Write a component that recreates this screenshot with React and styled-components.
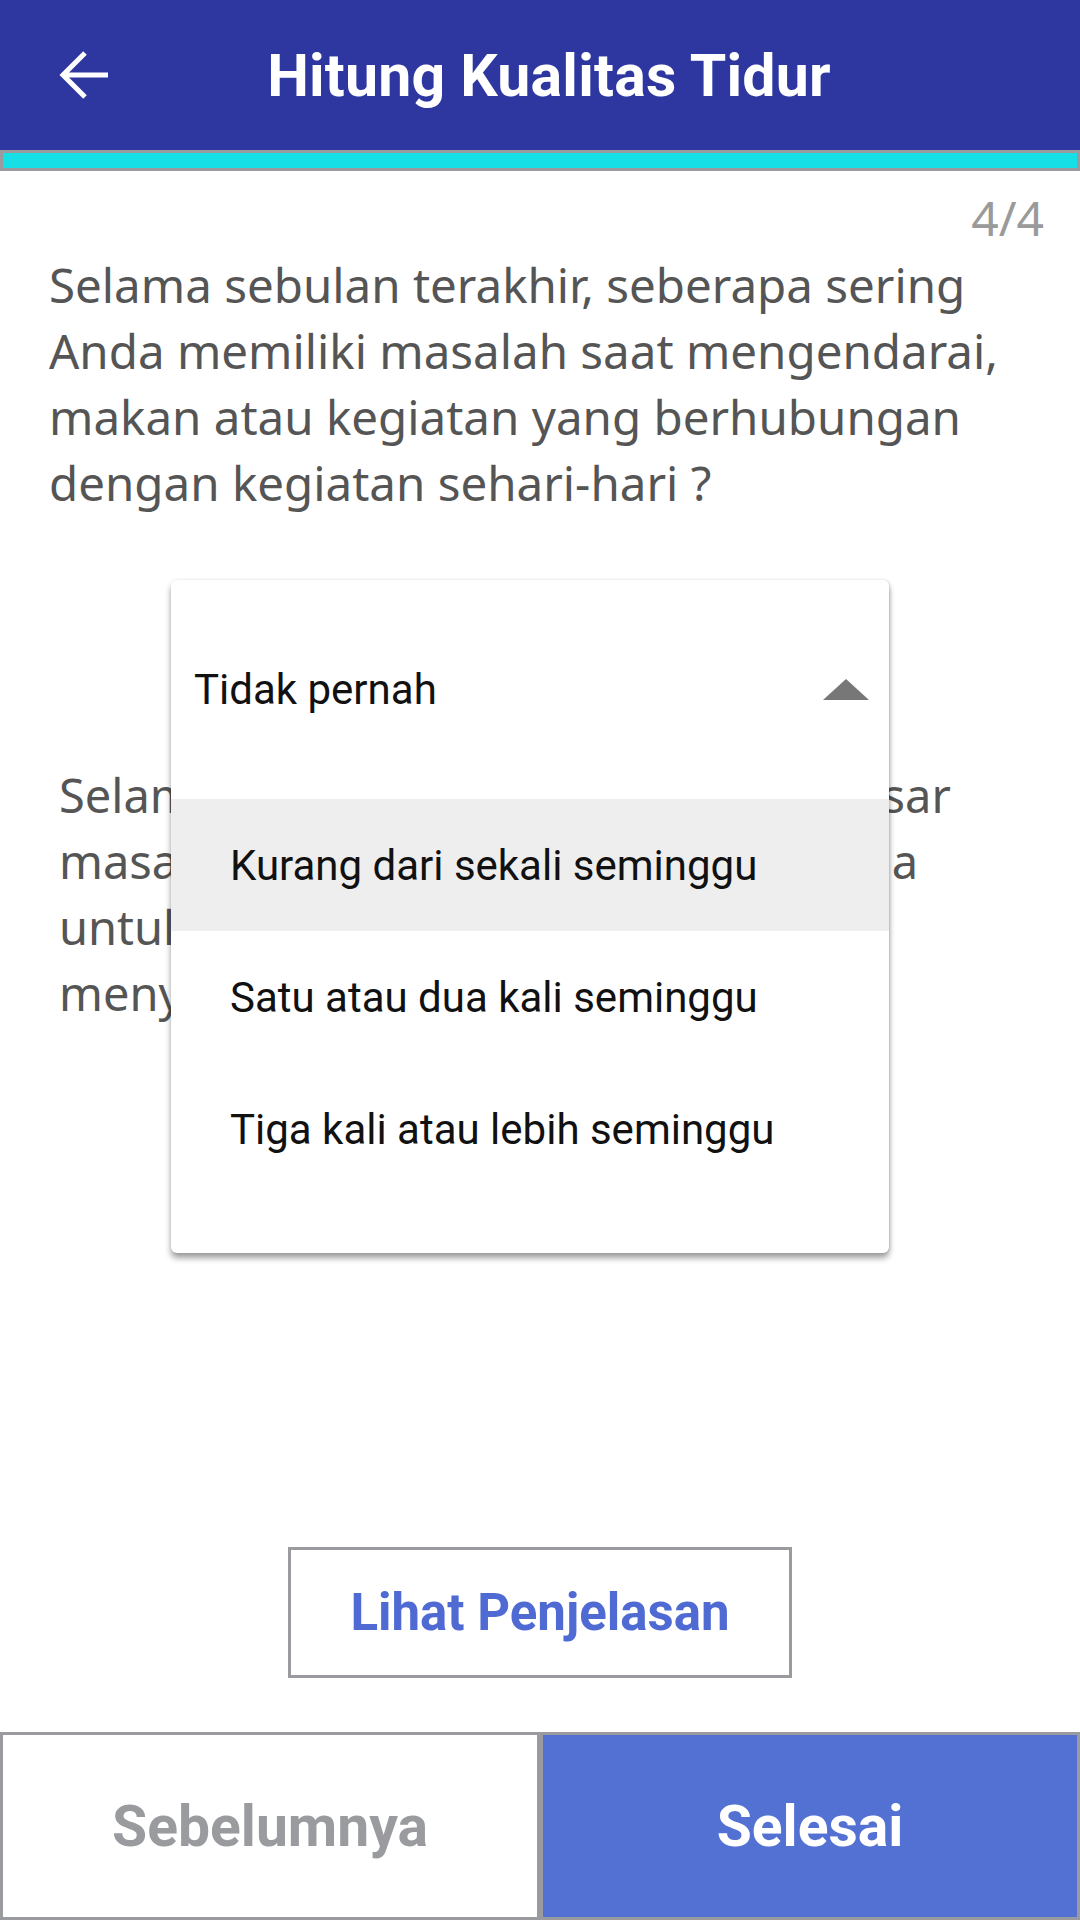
import React from "react";
import styled, { createGlobalStyle } from "styled-components";

const GlobalStyle = createGlobalStyle`
  html, body {
    margin: 0;
    padding: 0;
    background: #ffffff;
  }
  * {
    box-sizing: border-box;
  }
`;

const Screen = styled.div`
  width: 1080px;
  height: 1920px;
  display: flex;
  flex-direction: column;
  background: #ffffff;
  font-family: "Noto Sans", "Open Sans", sans-serif;
  overflow: hidden;
`;

const Header = styled.div`
  height: 150px;
  background: #2e37a0;
  display: flex;
  align-items: center;
  flex-shrink: 0;
`;

const BackButton = styled.div`
  width: 120px;
  height: 150px;
  display: flex;
  align-items: center;
  padding-left: 58px;
`;

const Title = styled.div`
  flex: 1;
  padding-right: 102px;
  text-align: center;
  color: #ffffff;
  font-family: Roboto, "Liberation Sans", sans-serif;
  font-weight: 700;
  font-size: 59px;
  letter-spacing: 0.2px;
`;

const Progress = styled.div`
  height: 21px;
  border: 3px solid #999b9e;
  background: #17dfe6;
  flex-shrink: 0;
`;

const Body = styled.div`
  flex: 1;
  display: flex;
  flex-direction: column;
`;

const Counter = styled.div`
  text-align: right;
  padding: 22px 36px 0 0;
  margin-bottom: 9px;
  color: #9a9a9a;
  font-size: 48px;
  line-height: 50px;
  font-family: "Noto Sans", sans-serif;
`;

const Question = styled.div`
  padding: 0 40px 0 ${(p) => p.$left || 49}px;
  color: #555555;
  font-size: ${(p) => p.$size || 47}px;
  line-height: 66px;
  white-space: nowrap;
`;

const Line = styled.div``;

const SpinnerWrap = styled.div`
  position: relative;
  height: 182px;
  margin-top: 64px;
`;

const Popup = styled.div`
  position: absolute;
  top: 0;
  left: 171px;
  width: 718px;
  height: 673px;
  background: #ffffff;
  border-radius: 6px;
  box-shadow: 0 5px 6px rgba(0, 0, 0, 0.38), 1px 0 3px rgba(0, 0, 0, 0.12);
  z-index: 2;
  display: flex;
  flex-direction: column;
  font-family: Roboto, "Liberation Sans", sans-serif;
  color: #111111;
`;

const Selected = styled.div`
  height: 219px;
  display: flex;
  align-items: center;
  justify-content: space-between;
  padding: 0 20px 0 23px;
  font-size: 42px;
`;

const Caret = styled.div`
  width: 0;
  height: 0;
  border-left: 23px solid transparent;
  border-right: 23px solid transparent;
  border-bottom: 21px solid #777777;
`;

const Option = styled.div`
  height: 132px;
  display: flex;
  align-items: center;
  padding-left: 59px;
  font-size: 42px;
  background: ${(p) => (p.$active ? "#eeeeee" : "transparent")};
`;

const Spacer = styled.div`
  flex: 1;
`;

const ExplainRow = styled.div`
  display: flex;
  justify-content: center;
  padding-bottom: 54px;
`;

const ExplainButton = styled.button`
  width: 504px;
  height: 131px;
  background: #ffffff;
  border: 3px solid #999b9e;
  color: #4f6bd3;
  font-family: Roboto, "Liberation Sans", sans-serif;
  font-weight: 700;
  font-size: 51px;
  cursor: pointer;
`;

const BottomBar = styled.div`
  height: 188px;
  display: flex;
  flex-shrink: 0;
`;

const NavButton = styled.button`
  flex: 1;
  height: 100%;
  border: 3px solid #999b9e;
  background: ${(p) => (p.$primary ? "#5370d3" : "#ffffff")};
  color: ${(p) => (p.$primary ? "#ffffff" : "#999b9e")};
  font-family: Roboto, "Liberation Sans", sans-serif;
  font-weight: 700;
  font-size: 57px;
  cursor: pointer;
`;

const options = [
  "Kurang dari sekali seminggu",
  "Satu atau dua kali seminggu",
  "Tiga kali atau lebih seminggu",
];

export default function App() {
  return (
    <>
      <GlobalStyle />
      <Screen>
        <Header>
          <BackButton>
            <svg width="52" height="50" viewBox="0 0 52 50">
              <path
                d="M50 25H6M27 3L5 25l22 22"
                fill="none"
                stroke="#ffffff"
                strokeWidth="5"
              />
            </svg>
          </BackButton>
          <Title>Hitung Kualitas Tidur</Title>
        </Header>
        <Progress />
        <Body>
          <Counter>4/4</Counter>
          <Question $size={47.5}>
            <Line>Selama sebulan terakhir, seberapa sering</Line>
            <Line>Anda memiliki masalah saat mengendarai,</Line>
            <Line>makan atau kegiatan yang berhubungan</Line>
            <Line>dengan kegiatan sehari-hari ?</Line>
          </Question>
          <SpinnerWrap>
            <Popup>
              <Selected>
                <span>Tidak pernah</span>
                <Caret />
              </Selected>
              {options.map((o, i) => (
                <Option key={o} $active={i === 0}>
                  {o}
                </Option>
              ))}
            </Popup>
          </SpinnerWrap>
          <Question $left={59}>
            <Line>Selama sebulan terakhir, seberapa besar</Line>
            <Line>masalah yang dihadapi untuk menjaga</Line>
            <Line>untuk tetap antusias dalam</Line>
            <Line>menyelesaikan sesuatu ?</Line>
          </Question>
          <Spacer />
          <ExplainRow>
            <ExplainButton>Lihat Penjelasan</ExplainButton>
          </ExplainRow>
        </Body>
        <BottomBar>
          <NavButton>Sebelumnya</NavButton>
          <NavButton $primary>Selesai</NavButton>
        </BottomBar>
      </Screen>
    </>
  );
}
